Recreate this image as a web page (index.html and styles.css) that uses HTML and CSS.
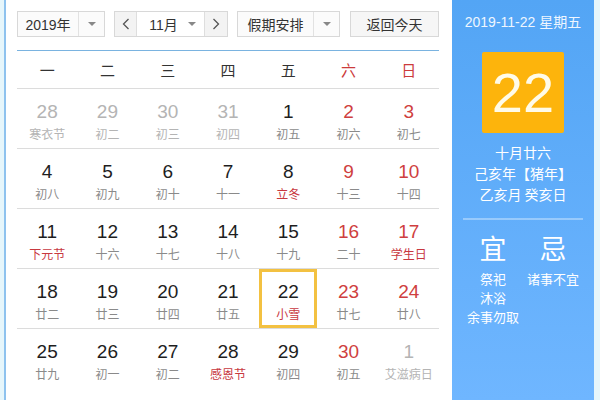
FILE: index.html
```html
<!DOCTYPE html>
<html lang="zh-CN">
<head>
<meta charset="utf-8">
<title>万年历</title>
<link rel="stylesheet" href="styles.css">
</head>
<body>
<div class="page">
  <div class="frame">
    <div class="main">
      <div class="toolbar">
        <div class="select year"><span class="sel-text">2019年</span><span class="sel-arrow"></span></div>
        <div class="month-group">
          <span class="nav prev"><svg width="8" height="12" viewBox="0 0 8 12"><path d="M6.5 1 L1.5 6 L6.5 11" fill="none" stroke="#555" stroke-width="1.3"/></svg></span>
          <span class="month"><span>11月</span><span class="sel-arrow small"></span></span>
          <span class="nav next"><svg width="8" height="12" viewBox="0 0 8 12"><path d="M1.5 1 L6.5 6 L1.5 11" fill="none" stroke="#555" stroke-width="1.3"/></svg></span>
        </div>
        <div class="select holiday"><span class="sel-text">假期安排</span><span class="sel-arrow"></span></div>
        <div class="btn">返回今天</div>
      </div>
      <div class="weekdays">
        <span>一</span><span>二</span><span>三</span><span>四</span><span>五</span><span class="red">六</span><span class="red">日</span>
      </div>
      <div class="grid">
        <div class="row">
          <div class="cell other"><b>28</b><i>寒衣节</i></div>
          <div class="cell other"><b>29</b><i>初二</i></div>
          <div class="cell other"><b>30</b><i>初三</i></div>
          <div class="cell other"><b>31</b><i>初四</i></div>
          <div class="cell"><b>1</b><i>初五</i></div>
          <div class="cell wk"><b>2</b><i>初六</i></div>
          <div class="cell wk"><b>3</b><i>初七</i></div>
        </div>
        <div class="row">
          <div class="cell"><b>4</b><i>初八</i></div>
          <div class="cell"><b>5</b><i>初九</i></div>
          <div class="cell"><b>6</b><i>初十</i></div>
          <div class="cell"><b>7</b><i>十一</i></div>
          <div class="cell"><b>8</b><i class="fest">立冬</i></div>
          <div class="cell wk"><b>9</b><i>十三</i></div>
          <div class="cell wk"><b>10</b><i>十四</i></div>
        </div>
        <div class="row">
          <div class="cell"><b>11</b><i class="fest">下元节</i></div>
          <div class="cell"><b>12</b><i>十六</i></div>
          <div class="cell"><b>13</b><i>十七</i></div>
          <div class="cell"><b>14</b><i>十八</i></div>
          <div class="cell"><b>15</b><i>十九</i></div>
          <div class="cell wk"><b>16</b><i>二十</i></div>
          <div class="cell wk"><b>17</b><i class="fest">学生日</i></div>
        </div>
        <div class="row">
          <div class="cell"><b>18</b><i>廿二</i></div>
          <div class="cell"><b>19</b><i>廿三</i></div>
          <div class="cell"><b>20</b><i>廿四</i></div>
          <div class="cell"><b>21</b><i>廿五</i></div>
          <div class="cell today"><b>22</b><i class="fest">小雪</i></div>
          <div class="cell wk"><b>23</b><i>廿七</i></div>
          <div class="cell wk"><b>24</b><i>廿八</i></div>
        </div>
        <div class="row last">
          <div class="cell"><b>25</b><i>廿九</i></div>
          <div class="cell"><b>26</b><i>初一</i></div>
          <div class="cell"><b>27</b><i>初二</i></div>
          <div class="cell"><b>28</b><i class="fest">感恩节</i></div>
          <div class="cell"><b>29</b><i>初四</i></div>
          <div class="cell wk"><b>30</b><i>初五</i></div>
          <div class="cell other"><b>1</b><i>艾滋病日</i></div>
        </div>
      </div>
    </div>
    <div class="side">
      <div class="side-date">2019-11-22 星期五</div>
      <div class="big-day">22</div>
      <div class="lunar">
        <div>十月廿六</div>
        <div>己亥年【猪年】</div>
        <div>乙亥月 癸亥日</div>
      </div>
      <div class="divider"></div>
      <div class="yiji">
        <div class="col">
          <div class="yj-title">宜</div>
          <div>祭祀</div>
          <div>沐浴</div>
          <div>余事勿取</div>
        </div>
        <div class="col">
          <div class="yj-title">忌</div>
          <div>诸事不宜</div>
        </div>
      </div>
    </div>
  </div>
</div>
</body>
</html>
```

FILE: styles.css
```css
* { box-sizing: border-box; }
html, body { margin: 0; padding: 0; }
body {
  width: 600px;
  height: 400px;
  overflow: hidden;
  background: #ffffff;
  font-family: "Liberation Sans", "Noto Sans CJK SC", sans-serif;
  color: #333;
}
.page {
  width: 600px;
  height: 400px;
  background: #e6f6fb;
  padding-right: 6px;
}
.frame {
  display: flex;
  height: 396px;
  margin-left: 4px;
  background: #fff;
}
.main {
  width: 448px;
  height: 400px;
  border-left: 2px solid #8ec2ee;
  padding: 11px 13px 0 11px;
  background: #fff;
}
.toolbar {
  display: flex;
  height: 26px;
  font-size: 14px;
  color: #333;
}
.select, .month-group, .btn {
  display: flex;
  height: 26px;
  border: 1px solid #d8d8d8;
  background: #fbfbfb;
}
.select .sel-text {
  display: flex;
  align-items: center;
  justify-content: center;
  border-right: 1px solid #e2e2e2;
}
.sel-arrow {
  flex: 1;
  display: flex;
  align-items: center;
  justify-content: center;
}
.sel-arrow::after {
  content: "";
  border-left: 4px solid transparent;
  border-right: 4px solid transparent;
  border-top: 4px solid #888;
}
.year { width: 88px; }
.year .sel-text { width: 61px; }
.month-group { width: 114px; margin-left: 9px; }
.nav {
  display: flex;
  align-items: center;
  justify-content: center;
  background: #f3f3f3;
}
.prev { width: 22px; border-right: 1px solid #dedede; }
.next { width: 23px; border-left: 1px solid #dedede; }
.month {
  flex: 1;
  display: flex;
  align-items: center;
  justify-content: center;
  gap: 10px;
  background: #fff;
  padding-left: 4px;
}
.sel-arrow.small { flex: none; }
.holiday { width: 103px; margin-left: 9px; }
.holiday .sel-text { width: 76px; }
.btn {
  width: 89px;
  margin-left: 10px;
  align-items: center;
  justify-content: center;
  background: #f6f6f6;
}
.weekdays {
  display: grid;
  grid-template-columns: repeat(7, 1fr);
  margin-top: 13px;
  height: 39px;
  border-top: 1px solid #7ab3e0;
  border-bottom: 1px solid #dcdcdc;
  font-size: 15px;
  color: #333;
  align-items: center;
  text-align: center;
  font-family: "Noto Sans CJK SC", sans-serif;
}
.red { color: #cc3b3b; }
.row {
  display: grid;
  grid-template-columns: repeat(7, 1fr);
  height: 60px;
  border-bottom: 1px solid #dcdcdc;
}
.row.last { border-bottom: none; }
.cell {
  display: flex;
  flex-direction: column;
  align-items: center;
  padding-top: 12px;
}
.cell b {
  font-weight: normal;
  font-size: 19px;
  line-height: 22px;
  color: #1e1e1e;
}
.cell i {
  font-style: normal;
  font-size: 12px;
  line-height: 16px;
  margin-top: 3px;
  color: #8a8a8a;
  font-family: "Noto Sans CJK SC", sans-serif;
  white-space: nowrap;
}
.cell.wk b { color: #cf3f40; }
.cell.other b { color: #b4b4b4; }
.cell.other i { color: #b4b4b4; }
.cell i.fest { color: #c8383f; }
.cell.today {
  box-shadow: inset 0 0 0 3px #f3c141;
  margin-left: 1px;
  margin-right: 1px;
}
.side {
  width: 142px;
  height: 400px;
  background: linear-gradient(#53a5f5, #6fb6ff);
  color: #fff;
  display: flex;
  flex-direction: column;
  align-items: center;
  font-family: "Noto Sans CJK SC", sans-serif;
}
.side-date {
  margin-top: 12px;
  font-size: 14px;
  line-height: 20px;
  color: #eef6ff;
  font-family: "Liberation Sans", "Noto Sans CJK SC", sans-serif;
}
.big-day {
  margin-top: 20px;
  width: 82px;
  height: 81px;
  background: #fdb40c;
  border-radius: 2px;
  font-size: 56px;
  line-height: 81px;
  text-align: center;
  font-family: "Liberation Sans", sans-serif;
  color: #fffbe8;
}
.lunar {
  margin-top: 9px;
  font-size: 14px;
  line-height: 21px;
  text-align: center;
}
.divider {
  margin-top: 13px;
  width: 120px;
  height: 2px;
  background: rgba(255, 255, 255, 0.35);
}
.yiji {
  display: grid;
  grid-template-columns: 60px 60px;
  margin-top: 10px;
  font-size: 13px;
  line-height: 19px;
}
.col {
  display: flex;
  flex-direction: column;
  align-items: center;
}
.yj-title {
  font-size: 27px;
  line-height: 36px;
  margin-bottom: 3px;
}
```
